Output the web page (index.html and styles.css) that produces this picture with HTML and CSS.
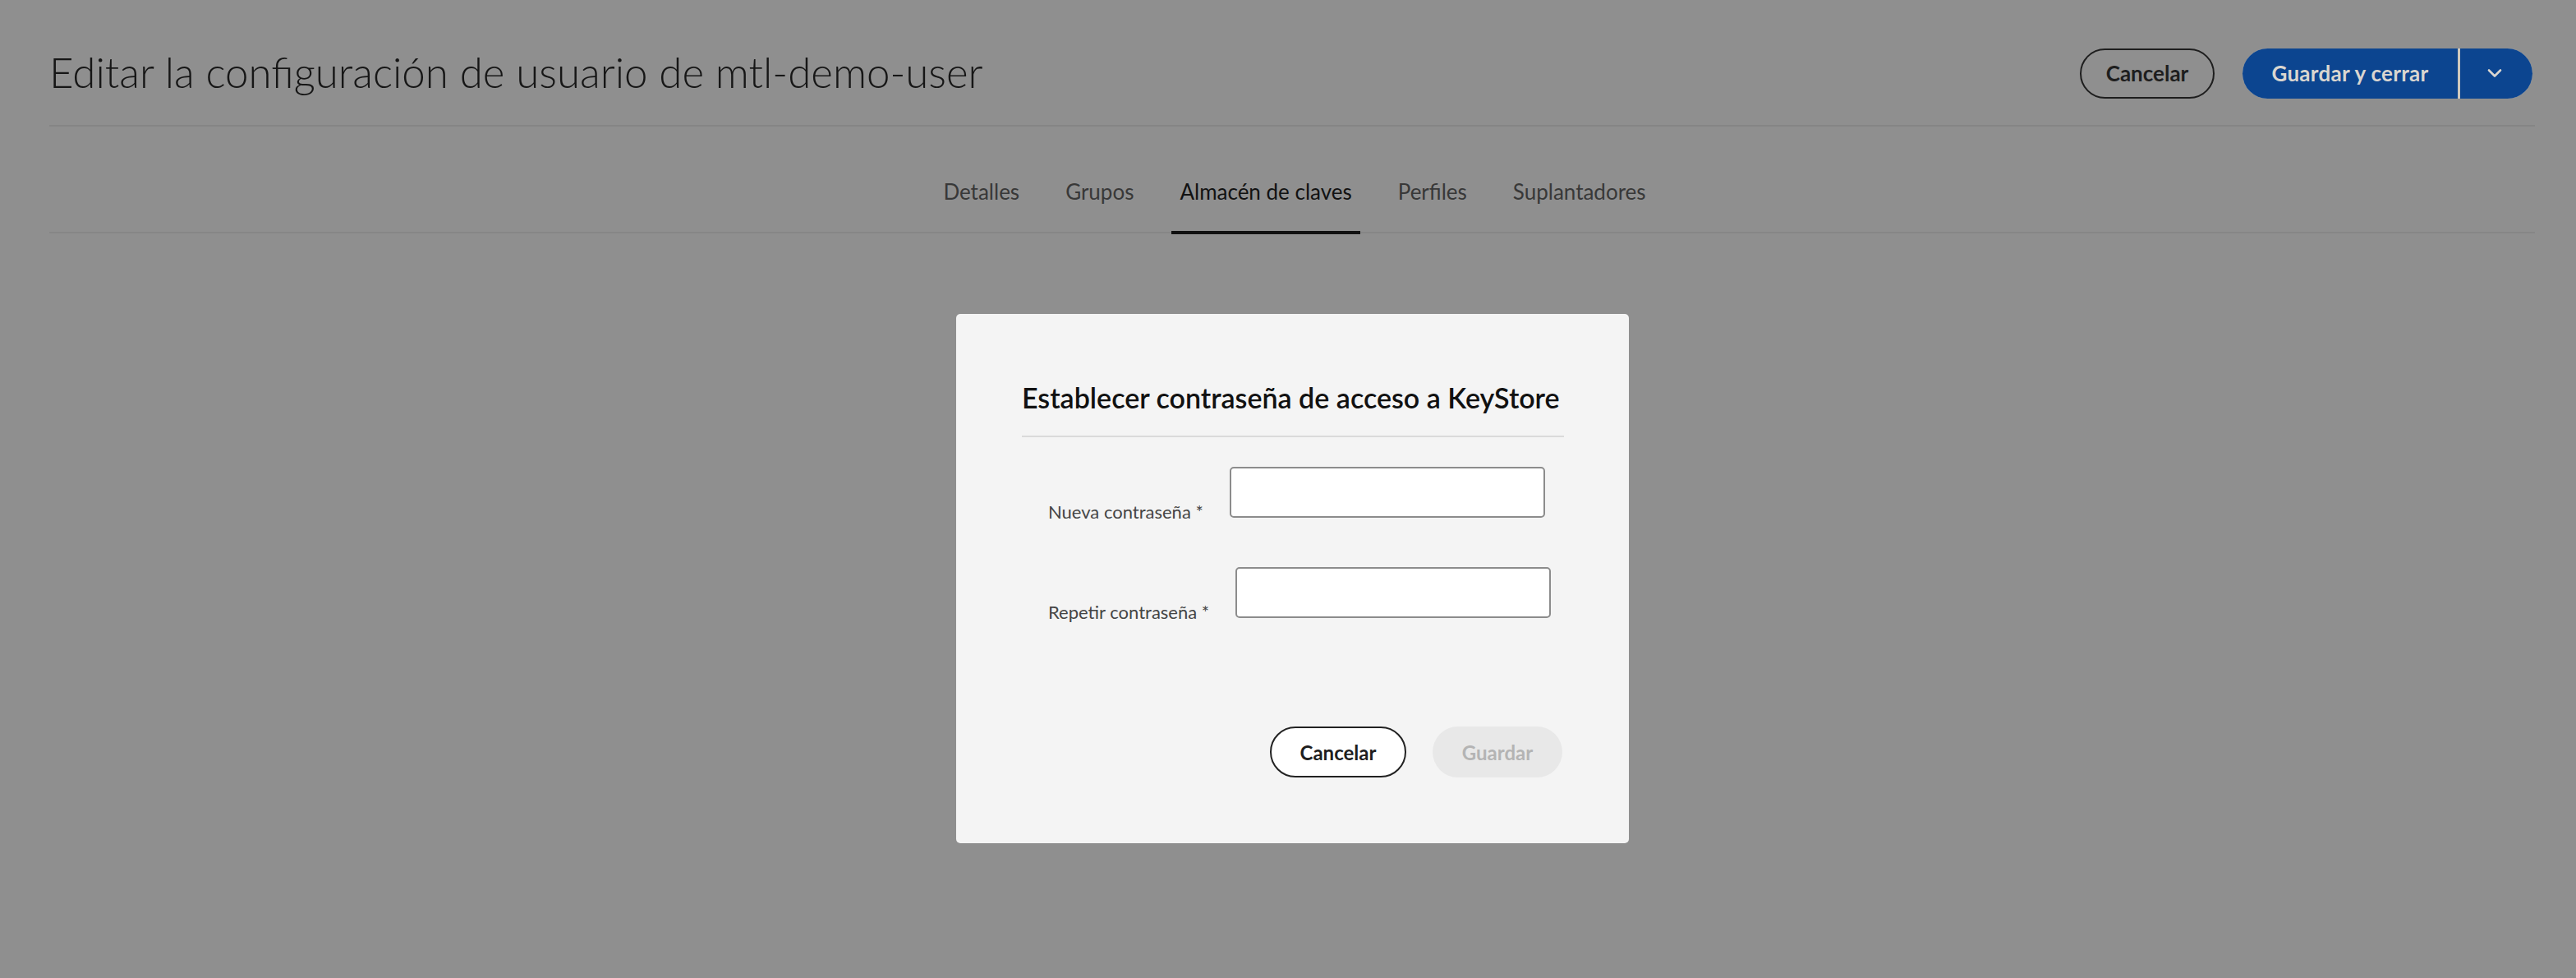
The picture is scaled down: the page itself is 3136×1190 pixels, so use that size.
FILE: index.html
```html
<!DOCTYPE html>
<html lang="es">
<head>
<meta charset="utf-8">
<title>Editar la configuración de usuario</title>
<link rel="stylesheet" href="styles.css">
</head>
<body>
<div class="page">
  <header class="header">
    <h1 class="title">Editar la configuración de usuario de mtl-demo-user</h1>
    <div class="actions">
      <button class="btn btn-outline">Cancelar</button>
      <div class="split">
        <button class="btn btn-primary">Guardar y cerrar</button>
        <button class="btn btn-primary btn-toggle" aria-label="Más">
          <svg width="20" height="12" viewBox="0 0 20 12"><path d="M3 2.5 L10 9.5 L17 2.5" fill="none" stroke="currentColor" stroke-width="2.6" stroke-linecap="round" stroke-linejoin="round"/></svg>
        </button>
      </div>
    </div>
  </header>
  <nav class="tabs">
    <a class="tab">Detalles</a>
    <a class="tab">Grupos</a>
    <a class="tab active">Almacén de claves</a>
    <a class="tab">Perfiles</a>
    <a class="tab">Suplantadores</a>
  </nav>
</div>
<div class="dialog">
  <h2 class="dialog-title">Establecer contraseña de acceso a KeyStore</h2>
  <div class="form">
    <div class="row">
      <label class="label">Nueva contraseña *</label>
      <input class="input" type="password">
    </div>
    <div class="row">
      <label class="label">Repetir contraseña *</label>
      <input class="input" type="password">
    </div>
  </div>
  <div class="dialog-actions">
    <button class="btn btn-outline btn-dlg">Cancelar</button>
    <button class="btn btn-disabled btn-dlg" disabled>Guardar</button>
  </div>
</div>
</body>
</html>
```
FILE: styles.css
```css
* { box-sizing: border-box; }
html, body {
  margin: 0;
  height: 100%;
}
body {
  background: #8f8f8f;
  font-family: Lato, "Open Sans", sans-serif;
  color: #1b1b1b;
  position: relative;
  overflow: hidden;
}
.page {
  padding: 0 50px 0 60px;
}
.header {
  display: flex;
  align-items: center;
  justify-content: space-between;
  height: 154px;
  border-bottom: 2px solid #858585;
  padding-top: 28px;
  padding-bottom: 2px;
}
.title {
  margin: 0;
  font-weight: 300;
  font-size: 51px;
  color: #161616;
  letter-spacing: 0;
  position: relative;
  top: -2px;
}
.actions {
  display: flex;
  align-items: center;
  gap: 34px;
  padding-right: 3px;
}
.btn {
  font-family: Lato, "Open Sans", sans-serif;
  font-weight: 700;
  font-size: 26px;
  height: 61px;
  border-radius: 31px;
  padding: 0;
  cursor: pointer;
}
.btn-outline {
  width: 164px;
  background: transparent;
  border: 2.5px solid #1e1e1e;
  color: #1e1e1e;
}
.split {
  display: flex;
  gap: 3px;
  background: #cfc8bd;
  border-radius: 31px;
}
.btn-primary {
  background: #0c4590;
  color: #dad6d0;
  border: none;
  width: 262px;
  border-radius: 31px 0 0 31px;
  letter-spacing: 0.3px;
}
.btn-toggle {
  width: 88px;
  border-radius: 0 31px 31px 0;
  display: flex;
  align-items: center;
  justify-content: center;
  padding-right: 4px;
}
.tabs {
  display: flex;
  justify-content: center;
  gap: 36px;
  height: 130px;
  border-bottom: 2px solid #868686;
  padding-left: 6px;
}
.tab {
  position: relative;
  display: flex;
  align-items: center;
  padding: 30px 10px 0;
  font-size: 26px;
  color: #383838;
}
.tab.active {
  color: #121212;
}
.tab.active::after {
  content: "";
  position: absolute;
  left: 0;
  right: 0;
  bottom: -3px;
  height: 4px;
  background: #111;
}
.dialog {
  position: absolute;
  left: 1164px;
  top: 382px;
  width: 819px;
  height: 644px;
  background: #f4f4f4;
  border-radius: 5px;
  padding: 80px 79px 80px 80px;
  display: flex;
  flex-direction: column;
}
.dialog-title {
  margin: 0;
  font-size: 34px;
  font-weight: 600;
  color: #111;
  line-height: 44px;
  padding-bottom: 24px;
  border-bottom: 2px solid #dadada;
  white-space: nowrap;
}
.form {
  display: flex;
  flex-direction: column;
  gap: 60px;
  padding: 36px 0 0 32px;
}
.row {
  display: flex;
  align-items: flex-end;
}
.label {
  font-size: 22px;
  color: #454545;
  line-height: 22px;
  margin-bottom: -4px;
  margin-right: 32px;
}
.input {
  width: 384px;
  height: 62px;
  background: #fff;
  border: 2px solid #8c8c8c;
  border-radius: 5px;
}
.dialog-actions {
  margin-top: auto;
  display: flex;
  justify-content: flex-end;
  gap: 32px;
  padding-right: 2px;
}
.btn-dlg {
  height: 62px;
  font-size: 24px;
}
.btn-dlg.btn-outline {
  width: 166px;
  background: #fff;
  border-color: #222;
  color: #1e1e1e;
}
.btn-disabled {
  width: 158px;
  background: #e8e8e8;
  border: none;
  color: #b4b4b4;
  cursor: default;
}
```
